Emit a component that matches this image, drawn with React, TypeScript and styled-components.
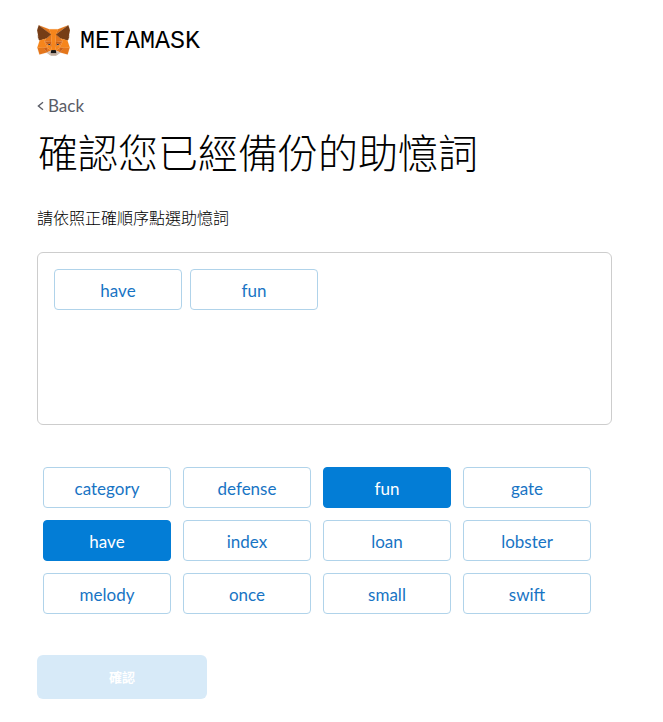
import React, { useState } from "react";
import styled, { createGlobalStyle } from "styled-components";

const GlobalStyle = createGlobalStyle`
  *, *::before, *::after { box-sizing: border-box; }
  body {
    margin: 0;
    background: #fff;
    color: #000;
    font-family: Lato, "Noto Sans CJK TC", sans-serif;
  }
  button { font-family: inherit; }
`;

const Page = styled.main`
  max-width: 960px;
  padding: 24px 51px 20px 37px;
`;

const Brand = styled.header`
  display: flex;
  align-items: center;
  gap: 10px;
  height: 32px;
`;

const FoxMark = styled.svg`
  flex: none;
  width: 33px;
  height: 31px;
`;

const Wordmark = styled.span`
  padding-top: 4px;
  font: 400 25px/28px "Liberation Mono", monospace;
  color: #000;
`;

const BackLink = styled.a`
  display: inline-flex;
  align-items: center;
  gap: 4px;
  margin-top: 39px;
  font-size: 17px;
  line-height: 22px;
  color: #5b5d67;
  text-decoration: none;
`;

const BackArrow = styled.svg`
  width: 7px;
  height: 10px;
`;

const Title = styled.h1`
  margin: 8px 0 0 1px;
  font-size: 40px;
  line-height: 56px;
  font-weight: 300;
`;

const Hint = styled.p`
  margin: 25px 0 22px;
  font-size: 16px;
  line-height: 24px;
  font-weight: 300;
`;

const ChosenBox = styled.section`
  display: flex;
  flex-wrap: wrap;
  align-content: flex-start;
  gap: 8px;
  min-height: 173px;
  padding: 16px;
  border: 1px solid #cdcdcd;
  border-radius: 6px;
`;

const WordPool = styled.section`
  display: flex;
  flex-wrap: wrap;
  gap: 12px;
  margin-top: 42px;
  padding: 0 6px;
`;

const WordButton = styled.button<{ $selected?: boolean }>`
  width: 128px;
  height: 41px;
  padding: 2px 8px 0;
  border: 1px solid ${(p) => (p.$selected ? "#037dd6" : "#b0d3ea")};
  border-radius: 4px;
  background: ${(p) => (p.$selected ? "#037dd6" : "#fff")};
  color: ${(p) => (p.$selected ? "#fff" : "#1874c4")};
  font-size: 17px;
  line-height: 24px;
  cursor: pointer;
`;

const ConfirmButton = styled.button`
  display: block;
  width: 170px;
  height: 44px;
  margin-top: 41px;
  border: 0;
  border-radius: 6px;
  background: #037dd6;
  color: #fff;
  font-size: 13px;
  line-height: 20px;
  font-weight: 700;
  cursor: pointer;

  &:disabled {
    background: #d7eaf8;
    cursor: default;
  }
`;

const FOX_FACETS: [string, string][] = [
  ["#e2761b", "274.1,35.5 174.6,109.4 193,65.8"],
  ["#e4761b", "44.4,35.5 143.1,110.1 125.6,65.8"],
  ["#e4761b", "238.3,206.8 211.8,247.4 268.5,263 284.8,207.7"],
  ["#e4761b", "33.9,207.7 50.1,263 106.8,247.4 80.3,206.8"],
  ["#e4761b", "103.6,138.2 87.8,162.1 144.1,164.6 142.1,104.1"],
  ["#e4761b", "214.9,138.2 175.9,103.4 174.6,164.6 230.8,162.1"],
  ["#e4761b", "106.8,247.4 140.6,230.9 111.4,208.1"],
  ["#e4761b", "177.9,230.9 211.8,247.4 207.1,208.1"],
  ["#d7c1b3", "211.8,247.4 177.9,230.9 180.6,253 180.3,262.3"],
  ["#d7c1b3", "106.8,247.4 138.3,262.3 138.1,253 140.6,230.9"],
  ["#233447", "138.8,193.5 110.6,185.2 130.5,176.1"],
  ["#233447", "179.7,193.5 188,176.1 208,185.2"],
  ["#cd6116", "106.8,247.4 111.6,206.8 80.3,207.7"],
  ["#cd6116", "207,206.8 211.8,247.4 238.3,207.7"],
  ["#cd6116", "230.8,162.1 174.6,164.6 179.8,193.5 188.1,176.1 208.1,185.2"],
  ["#cd6116", "110.6,185.2 130.6,176.1 138.8,193.5 144.1,164.6 87.8,162.1"],
  ["#e4751f", "87.8,162.1 111.4,208.1 110.6,185.2"],
  ["#e4751f", "208.1,185.2 207.1,208.1 230.8,162.1"],
  ["#e4751f", "144.1,164.6 138.8,193.5 145.4,227.6 146.9,182.7"],
  ["#e4751f", "174.6,164.6 171.9,182.6 173.1,227.6 179.8,193.5"],
  ["#f6851b", "179.8,193.5 173.1,227.6 177.9,230.9 207.1,208.1 208.1,185.2"],
  ["#f6851b", "110.6,185.2 111.4,208.1 140.6,230.9 145.4,227.6 138.8,193.5"],
  ["#c0ad9e", "180.3,262.3 180.6,253 178.1,250.8 140.4,250.8 138.1,253 138.3,262.3 106.8,247.4 117.8,256.4 140.1,271.9 178.4,271.9 200.8,256.4 211.8,247.4"],
  ["#161616", "177.9,230.9 173.1,227.6 145.4,227.6 140.6,230.9 138.1,253 140.4,250.8 178.1,250.8 180.6,253"],
  ["#763d16", "278.3,114.2 286.8,73.4 274.1,35.5 177.9,106.9 214.9,138.2 267.2,153.5 278.8,140 273.8,136.4 281.8,129.1 275.6,124.3 283.6,118.2"],
  ["#763d16", "31.8,73.4 40.3,114.2 34.9,118.2 42.9,124.3 36.8,129.1 44.8,136.4 39.8,140 51.3,153.5 103.6,138.2 140.6,106.9 44.4,35.5"],
  ["#f6851b", "267.2,153.5 214.9,138.2 230.8,162.1 207.1,208.1 238.3,207.7 284.8,207.7"],
  ["#f6851b", "103.6,138.2 51.3,153.5 33.9,207.7 80.3,207.7 111.4,208.1 87.8,162.1"],
  ["#f6851b", "174.6,164.6 177.9,106.9 193.1,65.8 125.6,65.8 140.6,106.9 144.1,164.6 145.3,182.8 145.4,227.6 173.1,227.6 173.3,182.8"],
];

const WORDS = [
  "category", "defense", "fun", "gate",
  "have", "index", "loan", "lobster",
  "melody", "once", "small", "swift",
];

function Fox() {
  return (
    <FoxMark viewBox="31 35 256 237" aria-hidden="true">
      {FOX_FACETS.map(([color, points]) => (
        <polygon key={points} points={points} fill={color} stroke={color} strokeLinejoin="round" />
      ))}
    </FoxMark>
  );
}

export default function App() {
  const [chosen, setChosen] = useState(["have", "fun"]);

  const toggle = (word: string) =>
    setChosen((list) =>
      list.includes(word) ? list.filter((w) => w !== word) : [...list, word]
    );

  return (
    <>
      <GlobalStyle />
      <Page>
        <Brand>
          <Fox />
          <Wordmark>METAMASK</Wordmark>
        </Brand>
        <BackLink href="#back">
          <BackArrow viewBox="0 0 7 10" aria-hidden="true">
            <path d="M6 1.2 1.4 5 6 8.8" fill="none" stroke="currentColor" strokeWidth="1.4" />
          </BackArrow>
          Back
        </BackLink>
        <Title>確認您已經備份的助憶詞</Title>
        <Hint>請依照正確順序點選助憶詞</Hint>
        <ChosenBox>
          {chosen.map((word) => (
            <WordButton key={word} type="button" onClick={() => toggle(word)}>
              {word}
            </WordButton>
          ))}
        </ChosenBox>
        <WordPool>
          {WORDS.map((word) => (
            <WordButton
              key={word}
              type="button"
              $selected={chosen.includes(word)}
              aria-pressed={chosen.includes(word)}
              onClick={() => toggle(word)}
            >
              {word}
            </WordButton>
          ))}
        </WordPool>
        <ConfirmButton type="button" disabled={chosen.length < WORDS.length}>
          確認
        </ConfirmButton>
      </Page>
    </>
  );
}
